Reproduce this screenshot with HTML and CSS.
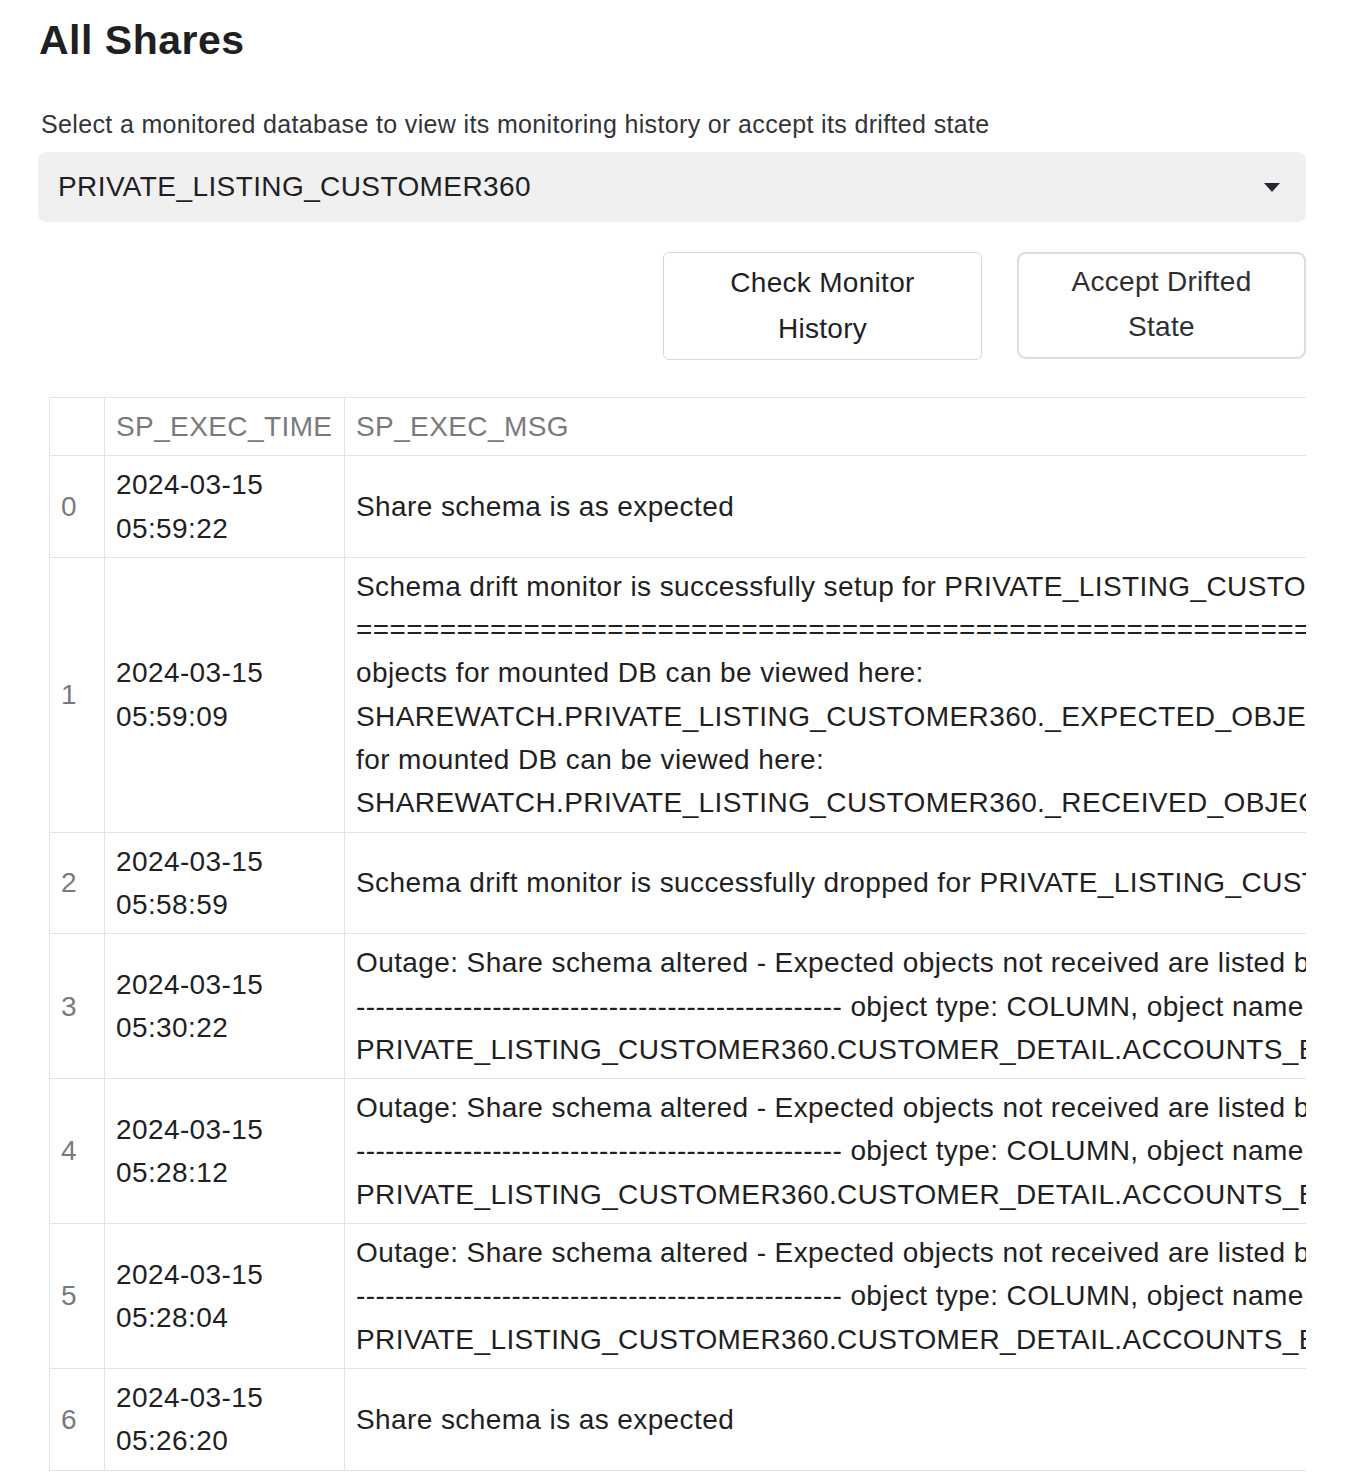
FILE: index.html
```html
<!DOCTYPE html>
<html lang="en">
<head>
<meta charset="utf-8">
<title>All Shares</title>
<link rel="stylesheet" href="styles.css">
</head>
<body>
<main class="page">
  <h1 class="title">All Shares</h1>
  <label class="field-label">Select a monitored database to view its monitoring history or accept its drifted state</label>
  <div class="select">
    <span class="select-value">PRIVATE_LISTING_CUSTOMER360</span>
    <svg class="caret" width="16" height="9" viewBox="0 0 16 9"><path d="M0 0 H16 L8 9 Z" fill="#262730"/></svg>
  </div>
  <div class="actions">
    <button class="btn btn-check">Check Monitor<br>History</button>
    <button class="btn btn-accept">Accept Drifted<br>State</button>
  </div>
  <div class="frame">
    <table class="grid">
      <colgroup>
        <col class="c-idx"><col class="c-time"><col class="c-msg">
      </colgroup>
      <thead>
        <tr><th class="idx"></th><th>SP_EXEC_TIME</th><th>SP_EXEC_MSG</th></tr>
      </thead>
      <tbody>
        <tr><td class="idx">0</td><td class="time">2024-03-15 05:59:22</td><td class="msg">Share schema is as expected</td></tr>
        <tr><td class="idx">1</td><td class="time">2024-03-15 05:59:09</td><td class="msg">Schema drift monitor is successfully setup for PRIVATE_LISTING_CUSTOMER360<br>==================================================================================== Expected<br>objects for mounted DB can be viewed here:<br>SHAREWATCH.PRIVATE_LISTING_CUSTOMER360._EXPECTED_OBJECTS Received objects<br>for mounted DB can be viewed here:<br>SHAREWATCH.PRIVATE_LISTING_CUSTOMER360._RECEIVED_OBJECTS</td></tr>
        <tr><td class="idx">2</td><td class="time">2024-03-15 05:58:59</td><td class="msg">Schema drift monitor is successfully dropped for PRIVATE_LISTING_CUSTOMER360</td></tr>
        <tr><td class="idx">3</td><td class="time">2024-03-15 05:30:22</td><td class="msg">Outage: Share schema altered - Expected objects not received are listed below<br>-------------------------------------------------- object type: COLUMN, object name:<br>PRIVATE_LISTING_CUSTOMER360.CUSTOMER_DETAIL.ACCOUNTS_BALANCE</td></tr>
        <tr><td class="idx">4</td><td class="time">2024-03-15 05:28:12</td><td class="msg">Outage: Share schema altered - Expected objects not received are listed below<br>-------------------------------------------------- object type: COLUMN, object name:<br>PRIVATE_LISTING_CUSTOMER360.CUSTOMER_DETAIL.ACCOUNTS_BALANCE</td></tr>
        <tr><td class="idx">5</td><td class="time">2024-03-15 05:28:04</td><td class="msg">Outage: Share schema altered - Expected objects not received are listed below<br>-------------------------------------------------- object type: COLUMN, object name:<br>PRIVATE_LISTING_CUSTOMER360.CUSTOMER_DETAIL.ACCOUNTS_BALANCE</td></tr>
        <tr><td class="idx">6</td><td class="time">2024-03-15 05:26:20</td><td class="msg">Share schema is as expected</td></tr>
      </tbody>
    </table>
  </div>
</main>
</body>
</html>
```
FILE: styles.css
```css
* { box-sizing: border-box; }
html, body { margin: 0; padding: 0; background: #ffffff; }
body {
  font-family: "Liberation Sans", Arial, Helvetica, sans-serif;
  color: #1f1f24;
}
.page {
  width: 1306px;
  padding: 16px 0 0 38px;
  display: flex;
  flex-direction: column;
}
.title {
  margin: 0 0 0 1px;
  font-size: 41px;
  line-height: 48px;
  font-weight: 700;
  letter-spacing: 0.5px;
  color: #1f1f24;
}
.field-label {
  margin: 45px 0 0 3px;
  font-size: 25px;
  line-height: 30px;
  letter-spacing: 0.35px;
  color: #33343a;
  display: block;
}
.select {
  margin-top: 13px;
  height: 70px;
  background: #f0f0f0;
  border-radius: 8px;
  display: flex;
  align-items: center;
  justify-content: space-between;
  padding: 0 26px 0 20px;
}
.select-value {
  font-size: 28px;
  letter-spacing: 0.4px;
  color: #1f1f24;
}
.caret { display: block; }
.actions {
  margin-top: 30px;
  display: flex;
  justify-content: flex-end;
  gap: 35px;
}
.btn {
  font-family: inherit;
  font-size: 28px;
  line-height: 46px;
  letter-spacing: 0.3px;
  color: #1f1f24;
  background: #ffffff;
  border: 1px solid #d9d9d9;
  border-radius: 6px;
  padding: 7px 0;
  text-align: center;
  margin: 0;
}
.btn-check { width: 319px; height: 108px; }
.btn-accept {
  width: 289px;
  height: 107px;
  border: 2px solid #dedede;
  border-radius: 9px;
  color: #2e2e33;
  line-height: 45px;
  padding: 4px 0 8px;
  box-shadow: 0 0 1px rgba(0,0,0,0.15);
}
.frame {
  margin: 37px 0 0 11px;
  width: 1257px;
  overflow: hidden;
}
.grid {
  border-collapse: collapse;
  table-layout: fixed;
  width: 2000px;
  font-size: 28px;
  line-height: 43.3px;
  letter-spacing: 0.4px;
}
.c-idx { width: 55px; }
.c-time { width: 240px; }
.c-msg { width: 1705px; }
.grid th, .grid td {
  border: 1px solid #e4e4e4;
  padding: 7px 10px 7px 11px;
  vertical-align: middle;
  text-align: left;
}
.grid th {
  font-weight: 400;
  color: #7a7a7e;
  white-space: nowrap;
}
.grid td.idx { color: #7a7a7e; }
.grid td.time { color: #1f1f24; }
.grid td.msg { white-space: nowrap; color: #1f1f24; }
```
